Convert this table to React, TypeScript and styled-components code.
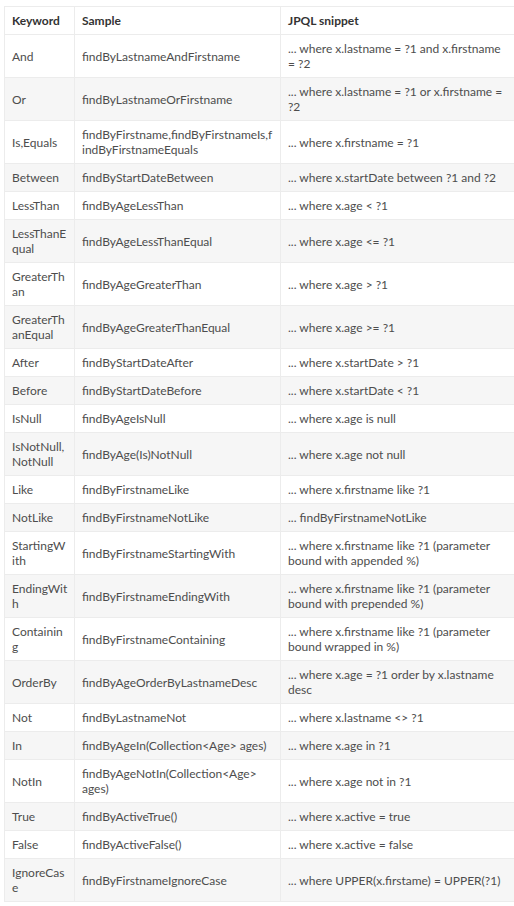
import styled, { createGlobalStyle } from 'styled-components';

const GlobalStyle = createGlobalStyle`
  html, body {
    margin: 0;
    padding: 0;
    background: #fff;
    overflow: hidden;
  }
  body {
    font-family: Lato, "Open Sans", "Noto Sans", sans-serif;
  }
`;

const ROWS: [string, string, string][] = [
  ['And', 'findByLastnameAndFirstname', '... where x.lastname = ?1 and x.firstname = ?2'],
  ['Or', 'findByLastnameOrFirstname', '... where x.lastname = ?1 or x.firstname = ?2'],
  ['Is,Equals', 'findByFirstname,findByFirstnameIs,findByFirstnameEquals', '... where x.firstname = ?1'],
  ['Between', 'findByStartDateBetween', '... where x.startDate between ?1 and ?2'],
  ['LessThan', 'findByAgeLessThan', '... where x.age < ?1'],
  ['LessThanEqual', 'findByAgeLessThanEqual', '... where x.age <= ?1'],
  ['GreaterThan', 'findByAgeGreaterThan', '... where x.age > ?1'],
  ['GreaterThanEqual', 'findByAgeGreaterThanEqual', '... where x.age >= ?1'],
  ['After', 'findByStartDateAfter', '... where x.startDate > ?1'],
  ['Before', 'findByStartDateBefore', '... where x.startDate < ?1'],
  ['IsNull', 'findByAgeIsNull', '... where x.age is null'],
  ['IsNotNull, NotNull', 'findByAge(Is)NotNull', '... where x.age not null'],
  ['Like', 'findByFirstnameLike', '... where x.firstname like ?1'],
  ['NotLike', 'findByFirstnameNotLike', '... findByFirstnameNotLike'],
  ['StartingWith', 'findByFirstnameStartingWith', '... where x.firstname like ?1 (parameter bound with appended %)'],
  ['EndingWith', 'findByFirstnameEndingWith', '... where x.firstname like ?1 (parameter bound with prepended %)'],
  ['Containing', 'findByFirstnameContaining', '... where x.firstname like ?1 (parameter bound wrapped in %)'],
  ['OrderBy', 'findByAgeOrderByLastnameDesc', '... where x.age = ?1 order by x.lastname desc'],
  ['Not', 'findByLastnameNot', '... where x.lastname <> ?1'],
  ['In', 'findByAgeIn(Collection<Age> ages)', '... where x.age in ?1'],
  ['NotIn', 'findByAgeNotIn(Collection<Age> ages)', '... where x.age not in ?1'],
  ['True', 'findByActiveTrue()', '... where x.active = true'],
  ['False', 'findByActiveFalse()', '... where x.active = false'],
  ['IgnoreCase', 'findByFirstnameIgnoreCase', '... where UPPER(x.firstame) = UPPER(?1)'],
];

const App = (): JSX.Element => {
  return (
    <Page>
      <GlobalStyle />
      <Table>
        <colgroup>
          <col style={{ width: 70 }} />
          <col style={{ width: 206 }} />
          <col />
        </colgroup>
        <thead>
          <tr>
            <HeadCell>Keyword</HeadCell>
            <HeadCell>Sample</HeadCell>
            <HeadCell>JPQL snippet</HeadCell>
          </tr>
        </thead>
        <tbody>
          {ROWS.map(([keyword, sample, snippet], i) => (
            <Row key={keyword} $striped={i % 2 === 1}>
              <Cell>{keyword}</Cell>
              <Cell>{sample}</Cell>
              <Cell>{snippet}</Cell>
            </Row>
          ))}
        </tbody>
      </Table>
    </Page>
  );
};

export default App;

const Page = styled.div`
  padding: 6px 0 0 4px;
  width: 514px;
  box-sizing: border-box;
`;

const Table = styled.table`
  width: 512px;
  border-collapse: collapse;
  table-layout: fixed;
  font-size: 12px;
  line-height: 15px;
`;

const HeadCell = styled.th`
  padding: 6px 7px;
  border: 1px solid #ececec;
  color: #333;
  font-weight: 700;
  text-align: left;
  background: #fff;
`;

const Row = styled.tr<{ $striped: boolean }>`
  background: ${props => (props.$striped ? '#f6f6f6' : '#fff')};
`;

const Cell = styled.td`
  padding: 6px 6px 6px 7px;
  border: 1px solid #ececec;
  color: #4d4d4d;
  vertical-align: middle;
  overflow-wrap: anywhere;
`;
